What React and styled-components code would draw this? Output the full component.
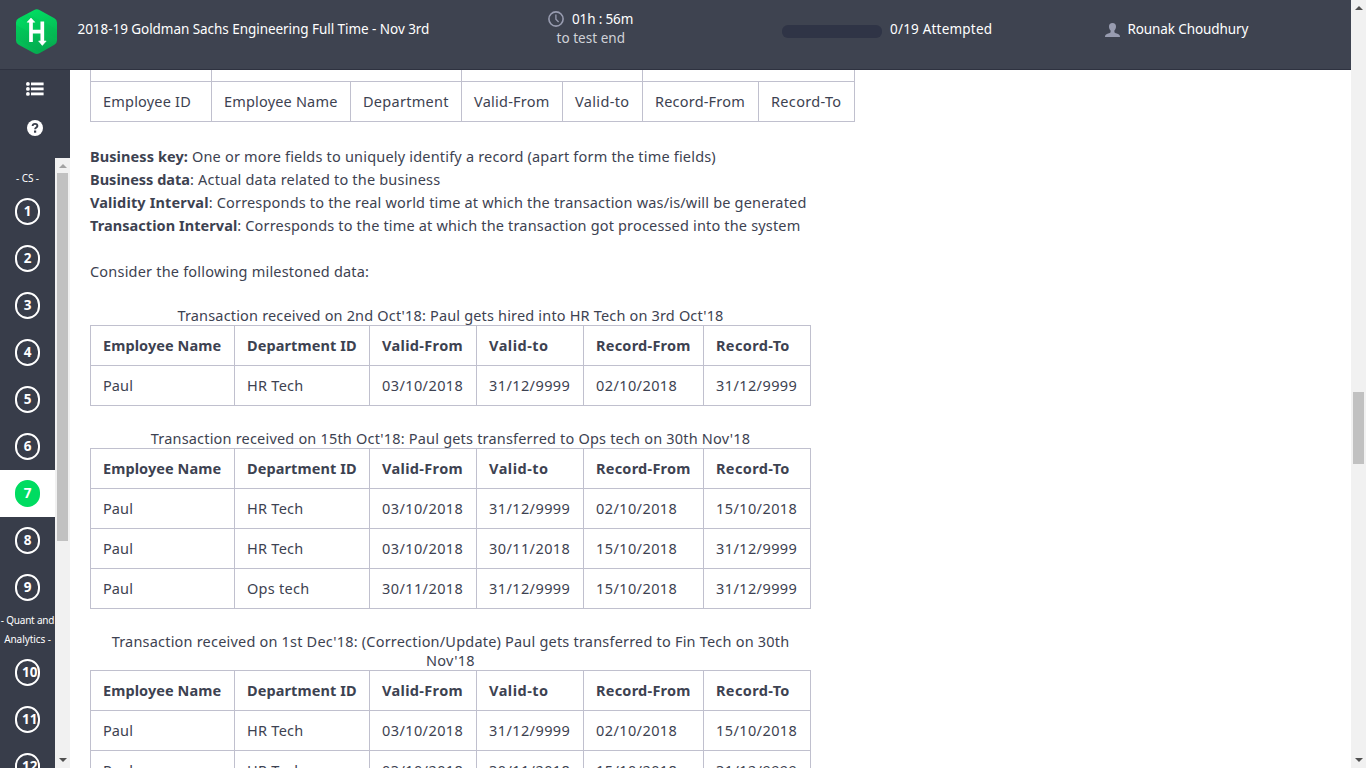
import React from 'react';
import styled, { createGlobalStyle } from 'styled-components';

const GlobalStyle = createGlobalStyle`
  * { box-sizing: border-box; }
  html, body { margin: 0; padding: 0; }
  body {
    overflow: hidden;
    background: #fff;
    color: #3d4251;
    font-family: "Noto Sans", "Open Sans", sans-serif;
  }
`;

const Window = styled.div`
  display: flex;
  width: 1366px;
  height: 768px;
  overflow: hidden;
`;

const Page = styled.div`
  display: flex;
  flex-direction: column;
  flex: 1;
  min-width: 0;
`;

const Text = styled.span`
  white-space: pre;
  letter-spacing: ${(p) => p.$track ?? 0.2}px;
  ${(p) => (p.$bold ? 'font-weight: 700;' : '')}
`;

/* ---------- header ---------- */

const Header = styled.header`
  display: grid;
  grid-template-columns: 77.5px 470.5px 234px 322.5px 1fr;
  height: 70px;
  flex: none;
  background: #3e4350;
  border-bottom: 1px solid #2e3240;
  color: #fff;
  font-size: 13.5px;
  line-height: 19px;
`;

const LogoBox = styled.a`
  padding: 9px 0 0 16px;
`;

const Title = styled.div`
  padding-top: 20px;
`;

const Timer = styled.div`
  padding-top: 10px;
`;

const TimerRow = styled.div`
  display: flex;
  align-items: center;
  gap: 8px;
  height: 19px;

  svg { margin-top: -1px; }
`;

const TimerNote = styled.div`
  padding-left: 8.5px;
  color: #d0d2d8;
`;

const Attempts = styled.div`
  display: flex;
  gap: 8px;
  padding-top: 20px;
`;

const Progress = styled.div`
  width: 100px;
  height: 13px;
  margin-top: 5px;
  border-radius: 6px;
  background: #2f3446;
`;

const User = styled.div`
  display: flex;
  gap: 8px;
  padding-top: 20px;

  svg { margin-top: 3px; }
`;

const Logo = () => (
  <svg width="42" height="46" viewBox="0 0 42 46" aria-hidden="true">
    <defs>
      <linearGradient id="hex" x1="0" y1="0" x2="0.35" y2="1">
        <stop offset="0" stopColor="#00e565" />
        <stop offset="1" stopColor="#06ad50" />
      </linearGradient>
      <clipPath id="hexClip">
        <path d="M18.2.9Q20.8-.5 23.4.9L38.4 9.2Q41 10.7 41 13.5V31.5Q41 34.3 38.4 35.8L23.4 44.2Q20.8 45.6 18.2 44.2L2.6 35.8Q0 34.3 0 31.5V13.5Q0 10.7 2.6 9.2Z" />
      </clipPath>
    </defs>
    <g clipPath="url(#hexClip)">
      <rect width="42" height="46" fill="url(#hex)" />
      <path d="M0 16L42 38V46H30L0 30Z" fill="#00a94e" opacity=".18" />
      <path d="M10 4L42 21V30L0 8Z" fill="#00a94e" opacity=".12" />
    </g>
    <path d="M15 33V12.5M26.3 12.5V33M15 22.7H26.3" stroke="#fff" strokeWidth="3.7" fill="none" />
    <path d="M11.1 13.2L15 9L18.8 13.2ZM22.6 32L26.3 36.4L30.2 32Z" fill="#fff" stroke="#fff" strokeWidth=".6" />
  </svg>
);

const ClockIcon = () => (
  <svg width="16" height="16" viewBox="0 0 16 16" fill="none" stroke="#989cb0" aria-hidden="true">
    <circle cx="8" cy="8" r="7.1" strokeWidth="1.6" />
    <path d="M7.9 3.6V8.2L10.6 11" strokeWidth="1.3" />
  </svg>
);

const UserIcon = () => (
  <svg width="15" height="14" viewBox="0 0 15 14" fill="#989cb0" aria-hidden="true">
    <path d="M7.5 0C9.8 0 11 1.3 11 3.5C11 5.4 10.4 6.6 9.4 7.5V9.2C9.9 10 11.5 10.3 13 10.9C14.3 11.4 15 12.3 15 14H0C0 12.3.7 11.4 2 10.9C3.5 10.3 5.1 10 5.6 9.2V7.5C4.6 6.6 4 5.4 4 3.5C4 1.3 5.2 0 7.5 0Z" />
  </svg>
);

/* ---------- scrollbar ---------- */

const Track = styled.div`
  display: flex;
  flex-direction: column;
  align-items: center;
  justify-content: space-between;
  width: 15px;
  flex: none;
  background: #f1f1f1;
`;

const Arrow = styled.div`
  display: flex;
  align-items: flex-start;
  justify-content: center;
  width: 15px;
  height: 15px;
  padding-top: ${(p) => (p.$down ? 5 : 6)}px;
`;

const Lane = styled.div`
  flex: 1;
  width: 11px;
  padding-top: ${(p) => p.$offset}px;
`;

const Thumb = styled.div`
  height: ${(p) => p.$size}px;
  background: #c1c1c1;
`;

const Scrollbar = ({ offset, size, atTop }) => (
  <Track>
    <Arrow>
      <svg width="8" height="4" viewBox="0 0 8 4">
        <path d="M0 4L4 0L8 4Z" fill={atTop ? '#a3a3a3' : '#505050'} />
      </svg>
    </Arrow>
    <Lane $offset={offset}>
      <Thumb $size={size} />
    </Lane>
    <Arrow $down>
      <svg width="8" height="4" viewBox="0 0 8 4">
        <path d="M0 0L4 4L8 0Z" fill="#505050" />
      </svg>
    </Arrow>
  </Track>
);

/* ---------- sidebar ---------- */

const Body = styled.div`
  display: flex;
  flex: 1;
  min-height: 0;
`;

const Sidebar = styled.nav`
  display: flex;
  flex-direction: column;
  width: 70px;
  flex: none;
  background: #383d4a;
  color: #fff;
`;

const Tools = styled.div`
  display: flex;
  flex-direction: column;
  align-items: center;
  gap: 24px;
  height: 88px;
  flex: none;
  padding-top: 12px;
`;

const Questions = styled.div`
  display: flex;
  flex: 1;
  min-height: 0;
`;

const QuestionList = styled.div`
  width: 55px;
  padding-top: 11px;
  overflow: hidden;
`;

const Section = styled.div`
  font-size: 10px;
  line-height: 19px;
  text-align: center;
  white-space: nowrap;
`;

const Question = styled.div`
  display: flex;
  justify-content: center;
  height: 47px;
  padding-top: 10px;
  background: ${(p) => (p.$active ? '#fff' : 'transparent')};
`;

const Bubble = styled.div`
  width: 25px;
  height: 27px;
  padding: 0 5px;
  border: 2px solid ${(p) => (p.$active ? '#00dc61' : '#fff')};
  border-radius: 12.5px;
  background: ${(p) => (p.$active ? '#00dc61' : 'transparent')};
  font-size: 13.5px;
  font-weight: 700;
  line-height: 22px;
  text-align: center;
`;

const ListIcon = () => (
  <svg width="18" height="14" viewBox="0 0 18 14" fill="#fff" aria-hidden="true">
    {[0.2, 5.2, 10.2].map((y) => (
      <g key={y}>
        <circle cx="1.9" cy={y + 1.7} r="1.9" />
        <rect x="5" y={y + 0.3} width="12.6" height="2.8" />
      </g>
    ))}
  </svg>
);

const HelpIcon = () => (
  <svg width="16" height="16" viewBox="0 0 16 16" aria-hidden="true">
    <circle cx="8" cy="8" r="8" fill="#fff" />
    <path d="M5.6 6C5.7 4.5 6.7 3.9 8 3.9C9.4 3.9 10.4 4.7 10.4 5.9C10.4 7.5 8.1 7.5 8.1 9.3" fill="none" stroke="#383d4a" strokeWidth="1.9" />
    <rect x="7" y="10.5" width="2.2" height="2.2" fill="#383d4a" />
  </svg>
);

/* ---------- content ---------- */

const Content = styled.main`
  flex: 1;
  min-width: 0;
  padding-left: 20px;
  overflow: hidden;
  font-size: 14.5px;
  line-height: 23px;
`;

const Paragraph = styled.div`
  margin: 23px 0;
`;

const Line = styled.div`
  height: 23px;
  white-space: pre;
`;

const Table = styled.table`
  width: ${(p) => p.$width}px;
  margin-bottom: 23px;
  table-layout: fixed;
  border-collapse: separate;
  border-spacing: 0;
  border-left: 1px solid #c0c0ce;

  caption {
    padding: 0;
    line-height: 19px;
    text-align: center;
  }

  th, td {
    height: 40px;
    padding: 0 0 0 12px;
    border: solid #c0c0ce;
    border-width: 0 1px 1px 0;
    text-align: left;
    white-space: nowrap;
  }

  thead th {
    height: 41px;
    border-top-width: 1px;
  }

  tr.groups td {
    height: 12px;
  }
`;

const Col = styled.col`
  width: ${(p) => p.$width}px;
`;

const FIELDS = [
  ['Employee ID', 121, 0.2],
  ['Employee Name', 139, 0.18],
  ['Department', 111, 0.28],
  ['Valid-From', 101, 0.24],
  ['Valid-to', 80, 0.36],
  ['Record-From', 116, 0.2],
  ['Record-To', 96, 0.33],
];

const COLUMNS = [
  ['Employee Name', 144, 0.08],
  ['Department ID', 135, 0.09],
  ['Valid-From', 107, 0.34],
  ['Valid-to', 107, 0.5],
  ['Record-From', 120, 0.24],
  ['Record-To', 107, 0.36],
];

const HISTORY = [
  {
    caption: [["Transaction received on 2nd Oct'18: Paul gets hired into HR Tech on 3rd Oct'18", 0.17]],
    rows: [['Paul', 'HR Tech', '03/10/2018', '31/12/9999', '02/10/2018', '31/12/9999']],
  },
  {
    caption: [["Transaction received on 15th Oct'18: Paul gets transferred to Ops tech on 30th Nov'18", 0.19]],
    rows: [
      ['Paul', 'HR Tech', '03/10/2018', '31/12/9999', '02/10/2018', '15/10/2018'],
      ['Paul', 'HR Tech', '03/10/2018', '30/11/2018', '15/10/2018', '31/12/9999'],
      ['Paul', 'Ops tech', '30/11/2018', '31/12/9999', '15/10/2018', '31/12/9999'],
    ],
  },
  {
    caption: [
      ["Transaction received on 1st Dec'18: (Correction/Update) Paul gets transferred to Fin Tech on 30th", 0.2],
      ["Nov'18", 0.25],
    ],
    rows: [
      ['Paul', 'HR Tech', '03/10/2018', '31/12/9999', '02/10/2018', '15/10/2018'],
      ['Paul', 'HR Tech', '03/10/2018', '30/11/2018', '15/10/2018', '31/12/9999'],
    ],
  },
];

const DEFINITIONS = [
  ['Business key:', 0.09, ' One or more fields to uniquely identify a record (apart form the time fields)', 0.19],
  ['Business data', 0.01, ': Actual data related to the business', 0.19],
  ['Validity Interval', 0.15, ': Corresponds to the real world time at which the transaction was/is/will be generated', 0.18],
  ['Transaction Interval', 0.06, ': Corresponds to the time at which the transaction got processed into the system', 0.17],
];

const HistoryTable = ({ caption, rows }) => (
  <Table $width={721}>
    <caption>
      {caption.map(([text, track], i) => (
        <React.Fragment key={text}>
          {i > 0 && <br />}
          <Text $track={track}>{text}</Text>
        </React.Fragment>
      ))}
    </caption>
    <colgroup>
      {COLUMNS.map(([name, width]) => <Col key={name} $width={width} />)}
    </colgroup>
    <thead>
      <tr>
        {COLUMNS.map(([name, , track]) => (
          <th key={name}><Text $bold $track={track}>{name}</Text></th>
        ))}
      </tr>
    </thead>
    <tbody>
      {rows.map((row, r) => (
        <tr key={r}>
          {row.map((cell, c) => (
            <td key={c}><Text $track={c > 1 ? 0.41 : c === 1 ? 0.27 : 0.1}>{cell}</Text></td>
          ))}
        </tr>
      ))}
    </tbody>
  </Table>
);

const QuestionItem = ({ n, active }) => (
  <Question $active={active}>
    <Bubble $active={active}>{n}</Bubble>
  </Question>
);

export default function App() {
  return (
    <Window>
      <GlobalStyle />
      <Page>
        <Header>
          <LogoBox><Logo /></LogoBox>
          <Title><Text $track={-0.05}>2018-19 Goldman Sachs Engineering Full Time - Nov 3rd</Text></Title>
          <Timer>
            <TimerRow>
              <ClockIcon />
              <Text $track={-0.15}>01h : 56m</Text>
            </TimerRow>
            <TimerNote><Text $track={0.04}>to test end</Text></TimerNote>
          </Timer>
          <Attempts>
            <Progress />
            <Text $track={0.2}>0/19 Attempted</Text>
          </Attempts>
          <User>
            <UserIcon />
            <Text $track={-0.1}>Rounak Choudhury</Text>
          </User>
        </Header>
        <Body>
          <Sidebar>
            <Tools>
              <ListIcon />
              <HelpIcon />
            </Tools>
            <Questions>
              <QuestionList>
                <Section><Text $track={-0.08}>- CS -</Text></Section>
                {[1, 2, 3, 4, 5, 6, 7, 8, 9].map((n) => (
                  <QuestionItem key={n} n={n} active={n === 7} />
                ))}
                <Section>
                  <Text $track={-0.2}>- Quant and</Text>
                  <br />
                  <Text $track={-0.08}>Analytics -</Text>
                </Section>
                {[10, 11, 12].map((n) => <QuestionItem key={n} n={n} />)}
              </QuestionList>
              <Scrollbar offset={0} size={368} atTop />
            </Questions>
          </Sidebar>
          <Content>
            <Table $width={765}>
              <colgroup>
                {FIELDS.map(([name, width]) => <Col key={name} $width={width} />)}
              </colgroup>
              <tbody>
                <tr className="groups">
                  <td />
                  <td colSpan={2} />
                  <td colSpan={2} />
                  <td colSpan={2} />
                </tr>
                <tr>
                  {FIELDS.map(([name, , track]) => (
                    <td key={name}><Text $track={track}>{name}</Text></td>
                  ))}
                </tr>
              </tbody>
            </Table>
            <Paragraph>
              {DEFINITIONS.map(([term, termTrack, meaning, track]) => (
                <Line key={term}>
                  <Text $bold $track={termTrack}>{term}</Text>
                  <Text $track={track}>{meaning}</Text>
                </Line>
              ))}
              <Line />
              <Line><Text $track={0.2}>Consider the following milestoned data:</Text></Line>
            </Paragraph>
            {HISTORY.map((table, i) => <HistoryTable key={i} {...table} />)}
          </Content>
        </Body>
      </Page>
      <Scrollbar offset={377} size={72} />
    </Window>
  );
}
